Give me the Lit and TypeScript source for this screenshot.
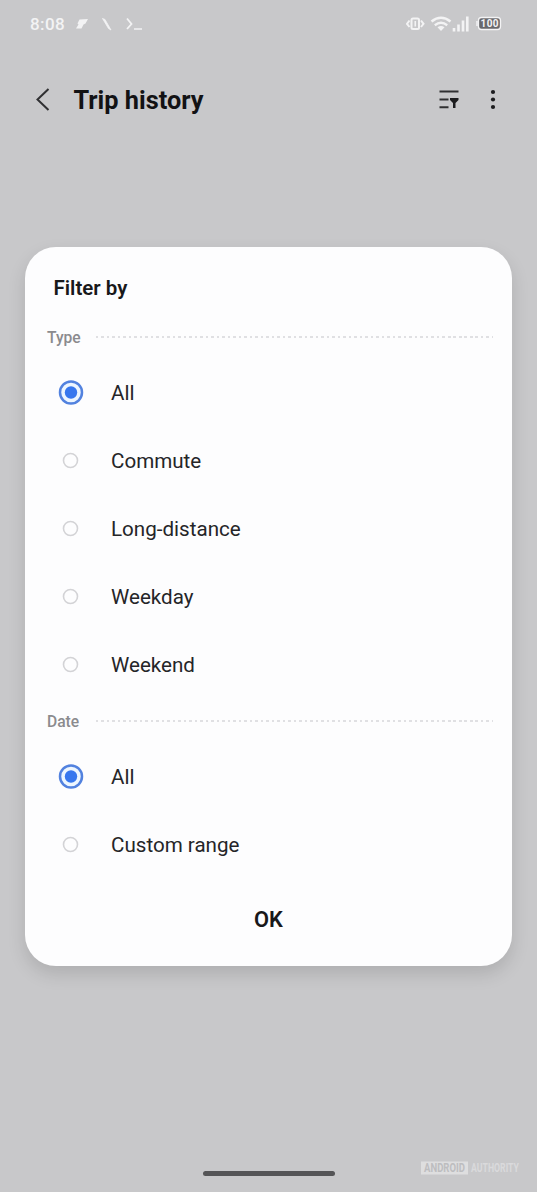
import { LitElement, html, css, svg } from "lit";
import { customElement, property, state } from "lit/decorators.js";

@customElement("status-bar")
class StatusBar extends LitElement {
  static styles = css`
    :host {
      display: flex;
      align-items: center;
      justify-content: space-between;
      height: 47px;
      padding: 0 34px 0 30px;
      box-sizing: border-box;
      color: #f3f3f4;
    }
    .side {
      display: flex;
      align-items: center;
    }
    .time {
      font-size: 17px;
      font-weight: 500;
      letter-spacing: 0.4px;
      width: 45px;
      line-height: 20px;
    }
    svg {
      display: block;
    }
    .battery {
      font-size: 10px;
      font-weight: 700;
    }
  `;

  render() {
    return html`
      <div class="side">
        <span class="time">8:08</span>
        <svg width="70" height="20" viewBox="0 0 70 20" fill="none" stroke="currentColor">
          <path d="M4.500 5.500 L13 5 L10.500 9.500 L8.500 10.500 L6.500 14.500 L1 14.500 L3.500 10.500 L2.500 9.500 Z" fill="currentColor" stroke="none" />
          <path d="M27.5 4.5 L30 5.500 L36 16 L33.5 14.5 Z" fill="currentColor" stroke-width="0.8" />
          <path d="M52 4.500 L56.500 10 L52 15" stroke-width="1.8" />
          <path d="M59 15 H67" stroke-width="1.5" />
        </svg>
      </div>
      <div class="side">
        <svg width="97" height="20" viewBox="0 0 97 20" fill="none" stroke="currentColor">
          <rect x="5.500" y="4.5" width="7.500" height="10.500" rx="1.5" stroke-width="2" />
          <path d="M9.250 7 V12.500" stroke-width="1.6" />
          <path d="M3.500 6.500 L1 9.800 L3.500 13 M15 6.500 L17.500 9.800 L15 13" stroke-width="2" />
          <path d="M25.500 7.500 Q35 0 44.500 7.500" stroke-width="2.6" />
          <path d="M28.800 11.200 Q35 6.500 41.200 11.200" stroke-width="2.400" />
          <path d="M31.500 13.200 Q35 10.800 38.500 13.200 L35 17 Z" fill="currentColor" stroke="none" />
          <path d="M48 14 V17.500 M52.500 10.500 V17.500 M57 6.500 V17.500 M61.300 2.500 V17.500" stroke-width="2.600" />
          <path d="M71 7 V12" stroke-width="1.500" />
          <rect x="72.500" y="3.500" width="22" height="12" rx="3" fill="#68686c" stroke-width="1.300" />
          <text class="battery" x="83.500" y="13.200" text-anchor="middle" textLength="18" fill="currentColor" stroke="none">100</text>
        </svg>
      </div>
    `;
  }
}

@customElement("app-bar")
class AppBar extends LitElement {
  static styles = css`
    :host {
      display: flex;
      align-items: center;
      height: 106px;
      padding: 0 31px 0 34px;
      box-sizing: border-box;
      color: #121214;
    }
    .title {
      flex: 1;
      margin: 0;
      padding: 2px 0 0 19.5px;
      font-size: 25.3px;
      font-weight: 700;
      line-height: 30px;
      white-space: nowrap;
    }
    svg {
      display: block;
    }
    .actions {
      display: flex;
      align-items: center;
      gap: 26px;
    }
  `;

  render() {
    return html`
      <svg width="20" height="26" viewBox="0 0 20 26" fill="none" stroke="#303032" stroke-width="2">
        <path d="M14.500 2 L3.500 12.500 L14.500 23" />
      </svg>
      <h1 class="title">Trip history</h1>
      <div class="actions">
        <svg width="22" height="22" viewBox="0 0 22 22">
          <path d="M1.500 2.500 H20.500 M1.500 10.500 H10.500 M1.500 18.300 H10.500" fill="none" stroke="#303032" stroke-width="2" />
          <path d="M12 9 H20.500 V11 L17.500 14 V19 H15 V14 L12 11 Z" fill="#1c1c1e" />
        </svg>
        <svg width="20" height="22" viewBox="0 0 20 22" fill="#1c1c1e">
          ${[3, 10.5, 18].map((y) => svg`<circle cx="7" cy=${y} r="2.1" />`)}
        </svg>
      </div>
    `;
  }
}

@customElement("radio-group")
class RadioGroup extends LitElement {
  @property() label = "";
  @property({ type: Array }) options: string[] = [];
  @state() private selected = 0;

  static styles = css`
    :host {
      display: block;
    }
    .header {
      display: flex;
      align-items: center;
      height: 44px;
      padding: 0 19px 0 22px;
    }
    .label {
      width: 49px;
      padding-top: 1px;
      font-size: 15.6px;
      font-weight: 500;
      line-height: 20px;
      color: #8b8b8e;
    }
    .rule {
      flex: 1;
      height: 2px;
      background: repeating-linear-gradient(90deg, #e0e0e3 0 2.5px, #fdfdfe 2.5px 5.5px);
    }
    .option {
      display: flex;
      align-items: center;
      height: 68px;
      padding-left: 33px;
      gap: 27px;
      font-size: 20.6px;
      color: #252528;
      cursor: pointer;
    }
    .mark {
      display: block;
      margin: 0 0 1px;
    }
  `;

  private mark(on: boolean) {
    return html`
      <svg class="mark" width="26" height="26" viewBox="0 0 26 26">
        ${on
          ? svg`
              <circle cx="13" cy="12.500" r="11" fill="#edf6ff" stroke="#5282df" stroke-width="2.500" />
              <circle cx="13" cy="12.500" r="6.200" fill="#3777ee" />`
          : svg`<circle cx="12.500" cy="12.500" r="7" fill="none" stroke="#d3d3d6" stroke-width="1.600" />`}
      </svg>
    `;
  }

  render() {
    return html`
      <div class="header">
        <span class="label">${this.label}</span>
        <span class="rule"></span>
      </div>
      ${this.options.map(
        (name, i) => html`
          <div class="option" role="radio" @click=${() => (this.selected = i)}>
            ${this.mark(i === this.selected)}
            <span>${name}</span>
          </div>
        `
      )}
    `;
  }
}

@customElement("app-root")
class AppRoot extends LitElement {
  static styles = css`
    :host {
      display: flex;
      flex-direction: column;
      width: 537px;
      height: 1192px;
      box-sizing: border-box;
      overflow: hidden;
      background: #c8c8ca;
      font-family: Roboto, "Liberation Sans", sans-serif;
    }
    .dialog {
      display: flex;
      flex-direction: column;
      height: 719px;
      margin: 94px 25px 0;
      background: #fdfdfe;
      border-radius: 31px;
      box-shadow: 0 8px 18px rgba(0, 0, 0, 0.13);
    }
    .heading {
      height: 68px;
      box-sizing: border-box;
      margin: 0;
      padding: 29px 0 0 28.5px;
      font-size: 20.5px;
      font-weight: 600;
      line-height: 24px;
      color: #18181a;
    }
    .ok {
      align-self: center;
      margin-top: 29px;
      font: inherit;
      font-size: 21.8px;
      font-weight: 600;
      line-height: 24px;
      padding: 0;
      border: 0;
      background: none;
      color: #18181a;
    }
    .footer {
      display: grid;
      grid-template-columns: 1fr 132px 1fr;
      align-items: end;
      margin-top: auto;
      height: 36px;
      padding: 0 17px 16px;
    }
    .handle {
      grid-column: 2;
      height: 5px;
      border-radius: 3px;
      background: #555557;
    }
    .watermark {
      display: flex;
      align-items: center;
      justify-content: flex-end;
      height: 16px;
    }
    .brand {
      overflow: visible;
    }
    .brand text {
      font-size: 9px;
      font-weight: 700;
    }
  `;

  render() {
    return html`
      <status-bar></status-bar>
      <app-bar></app-bar>
      <section class="dialog" role="dialog">
        <h2 class="heading">Filter by</h2>
        <radio-group
          label="Type"
          .options=${["All", "Commute", "Long-distance", "Weekday", "Weekend"]}
        ></radio-group>
        <radio-group label="Date" .options=${["All", "Custom range"]}></radio-group>
        <button class="ok">OK</button>
      </section>
      <div class="footer">
        <div class="handle"></div>
        <div class="watermark">
          <svg class="brand" width="100" height="16" viewBox="0 0 100 16">
            <rect x="1" y="1.500" width="47" height="13" fill="#dededf" />
            <g transform="scale(1 1.350)">
              <text x="4" y="9.100" textLength="41" lengthAdjust="spacingAndGlyphs" fill="#bdbdbf">ANDROID</text>
              <text x="51" y="9.100" textLength="48" lengthAdjust="spacingAndGlyphs" fill="#dadadc">AUTHORITY</text>
            </g>
          </svg>
        </div>
      </div>
    `;
  }
}
